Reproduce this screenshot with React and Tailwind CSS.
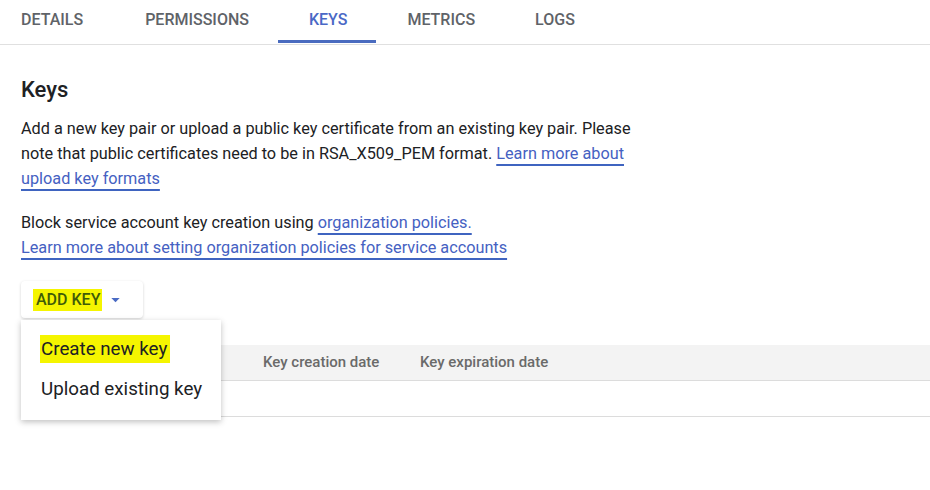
import { useState } from 'react'

const tabs = ['Details', 'Permissions', 'Keys', 'Metrics', 'Logs']

function Tabs({ active }) {
  return (
    <div className="flex h-[45px] border-b border-[#e0e0e0]">
      {tabs.map((tab, i) => (
        <div
          key={tab}
          className={
            'relative flex items-center text-[16px] font-medium uppercase ' +
            (i === 0 ? 'pl-[21px] pr-[31px] ' : 'pl-[31px] pr-[29px] ') +
            (tab === active ? 'text-[#4a68c6]' : 'text-[#5f6368]')
          }
        >
          <span className="-mt-[5px]">{tab}</span>
          {tab === active && (
            <div className="absolute left-0 right-0 bottom-[1px] h-[3px] bg-[#4a6bbf]" />
          )}
        </div>
      ))}
    </div>
  )
}

function Link({ children }) {
  return (
    <a className="text-[#4561c2] underline decoration-[#3f64c0] decoration-[1.5px] underline-offset-[5px]">
      {children}
    </a>
  )
}

export default function App() {
  const [open] = useState(true)

  return (
    <div className="w-[930px] h-[490px] overflow-hidden bg-white text-[#202124] font-['Roboto',sans-serif]">
      <Tabs active="Keys" />

      <div className="pl-[21px]">
        <h1 className="mt-[31px] text-[22px] leading-[28px] font-medium text-[#202124]">Keys</h1>

        <p className="mt-[12px] w-[630px] text-[16.25px] leading-[25px]">
          Add a new key pair or upload a public key certificate from an existing key pair. Please
          note that public certificates need to be in RSA_X509_PEM format.{' '}
          <Link>Learn more about upload key formats</Link>
        </p>

        <p className="mt-[19px] text-[16.25px] leading-[25px]">
          Block service account key creation using <Link>organization policies.</Link>
          <br />
          <Link>Learn more about setting organization policies for service accounts</Link>
        </p>

        {/* Add key button + menu */}
        <div className="relative z-10 mt-[21px] w-[122px]">
          <button className="flex h-[37px] w-[122px] items-center rounded-[4px] bg-white pl-[12px] shadow-[0_1px_3px_rgba(0,0,0,0.18)]">
            <span className="bg-[#f5f500] pl-[3px] pr-[2px] text-[16px] leading-[22px] font-medium text-[#3f5c08]">
              ADD KEY
            </span>
            <svg width="9" height="5" viewBox="0 0 10 6" className="ml-[9px] mt-[1px]">
              <path d="M0 0 L10 0 L5 5 Z" fill="#4a6bc4" />
            </svg>
          </button>

          {open && (
            <div className="absolute left-0 top-[39px] w-[200px] bg-white pt-[9px] pb-[11px] shadow-[0_2px_6px_rgba(0,0,0,0.25)]">
              <div className="flex h-[40px] items-center pl-[19px]">
                <span className="bg-[#f5f500] pl-[1px] pr-[3px] text-[18.75px] leading-[28px] text-[#202124]">
                  Create new key
                </span>
              </div>
              <div className="flex h-[40px] items-center pl-[20px] text-[18.75px] text-[#202124]">
                Upload existing key
              </div>
            </div>
          )}
        </div>

        {/* Keys table */}
        <div className="mt-[27px]">
          <div className="flex h-[36px] items-center border-b border-[#dcdcdc] bg-[#f3f3f3] text-[15px] font-medium text-[#6a6a6a]">
            <div className="w-[242px]" />
            <div className="w-[157px]">Key creation date</div>
            <div>Key expiration date</div>
          </div>
          <div className="h-[36px] border-b border-[#dcdcdc]" />
        </div>
      </div>
    </div>
  )
}
